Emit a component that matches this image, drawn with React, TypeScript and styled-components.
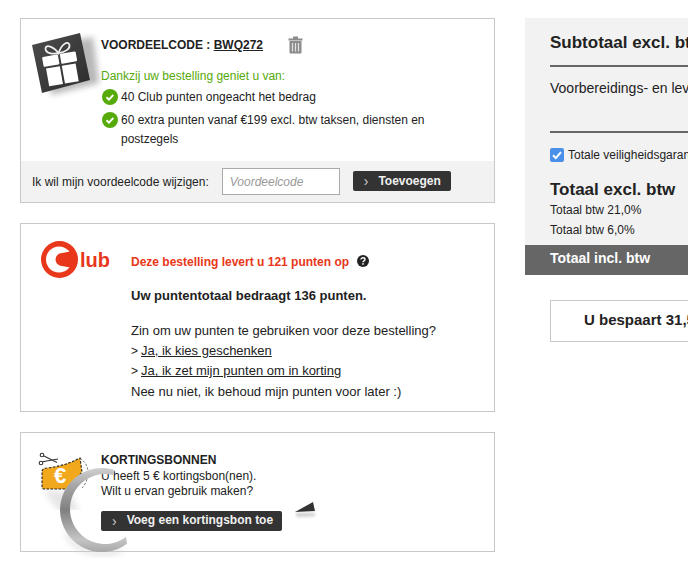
import styled, { createGlobalStyle } from "styled-components";

const GlobalStyle = createGlobalStyle`
  html, body {
    margin: 0;
    padding: 0;
    background: #fff;
    overflow: hidden;
  }
  body {
    font-family: "Liberation Sans", Arial, sans-serif;
    font-size: 12px;
    color: #222;
  }
`;

const GiftIcon = () => (
  <svg width="72" height="68" viewBox="0 0 72 68">
    <defs>
      <linearGradient id="giftBg" x1="0" y1="0" x2="1" y2="1">
        <stop offset="0" stopColor="#4d4d4d" />
        <stop offset="1" stopColor="#2c2c2c" />
      </linearGradient>
      <filter id="giftBlur" x="-30%" y="-30%" width="160%" height="160%">
        <feGaussianBlur stdDeviation="3" />
      </filter>
    </defs>
    <polygon points="14,14 62,4 68,50 20,62" fill="#000" opacity="0.28" filter="url(#giftBlur)" />
    <polygon points="1,12 49,0 59,47 11,60" fill="url(#giftBg)" />
    <g transform="rotate(-10 30 34)">
      <path
        d="M30 20 C26 12 19 9 18 13 C17 18 24 20 30 20 C36 20 43 18 42 13 C41 9 34 12 30 20Z"
        fill="none"
        stroke="#eee"
        strokeWidth="1.8"
      />
      <rect x="13" y="21" width="16" height="10" rx="1" fill="#fff" />
      <rect x="31" y="21" width="16" height="10" rx="1" fill="#fff" />
      <rect x="15" y="33" width="14" height="18" fill="#fff" />
      <rect x="31" y="33" width="14" height="18" fill="#fff" />
    </g>
  </svg>
);

const TrashIcon = () => (
  <svg width="15" height="18" viewBox="0 0 15 18">
    <path d="M5 1.5h5M0.5 3.5h14" stroke="#8c8c8c" strokeWidth="2" fill="none" />
    <path d="M1.5 5h12v11.5a1 1 0 0 1-1 1h-10a1 1 0 0 1-1-1z" fill="#8c8c8c" />
    <path d="M4.5 7v8.5M7.5 7v8.5M10.5 7v8.5" stroke="#e4e4e4" strokeWidth="1.2" />
  </svg>
);

const CheckIcon = () => (
  <svg width="16" height="16" viewBox="0 0 16 16">
    <circle cx="8" cy="8" r="8" fill="#56aa0a" />
    <path d="M4.5 8.3l2.4 2.3 4.4-4.6" fill="none" stroke="#fff" strokeWidth="1.9" />
  </svg>
);

const ClubLogo = () => (
  <svg width="37" height="37" viewBox="0 0 37 37">
    <circle cx="18.5" cy="18.5" r="18.5" fill="#e8371a" />
    <circle cx="18" cy="18.5" r="13" fill="#fff" />
    <circle cx="21" cy="18.5" r="6.5" fill="#e8371a" />
    <path d="M21 12 L32 10 L32 27 L21 25Z" fill="#e8371a" />
  </svg>
);

const QuestionIcon = () => (
  <svg width="12" height="12" viewBox="0 0 12 12">
    <circle cx="6" cy="6" r="6" fill="#222" />
    <path d="M4 4.6C4 3.4 5 2.8 6 2.8s2 .6 2 1.7c0 1.5-2 1.4-2 2.8" fill="none" stroke="#fff" strokeWidth="1.4" />
    <rect x="5.2" y="8.2" width="1.6" height="1.5" fill="#fff" />
  </svg>
);

const VoucherIcon = () => (
  <svg width="60" height="62" viewBox="0 0 60 62">
    <defs>
      <filter id="voucherBlur" x="-40%" y="-40%" width="180%" height="180%">
        <feGaussianBlur stdDeviation="3" />
      </filter>
    </defs>
    <polygon points="8,42 34,44 44,62 26,66" fill="#ccc" opacity="0.5" filter="url(#voucherBlur)" />
    <g stroke="#333" strokeWidth="1.1" fill="none">
      <circle cx="6" cy="15" r="1.8" />
      <circle cx="7" cy="7" r="1.8" />
      <path d="M7.5 13.8L23 11M9 8L22 14.5" />
    </g>
    <path d="M45 10 C50 14 53 18 53 24 C53 30 51 36 47 40" fill="none" stroke="#777" strokeWidth="1" strokeDasharray="2.5 1.5" />
    <path d="M7 23 Q8 20 12 20 Q30 18 45 10 L47 24 L33 41 L9 41 Q7 41 7 38Z" fill="#f1a81c" stroke="#222" strokeWidth="1.1" strokeDasharray="2.5 1.5" />
    <text x="19" y="35" fill="#fff" fontFamily="Liberation Sans" fontWeight="700" fontSize="22">€</text>
  </svg>
);

const SpinnerArc = () => (
  <svg width="90" height="105" viewBox="0 0 90 105">
    <defs>
      <linearGradient id="arcFade" x1="0" y1="0" x2="0" y2="1">
        <stop offset="0" stopColor="#d0d0d0" />
        <stop offset="0.2" stopColor="#a8a8a8" />
        <stop offset="0.5" stopColor="#808080" />
        <stop offset="0.85" stopColor="#c4c4c4" />
        <stop offset="1" stopColor="#a8a8a8" />
      </linearGradient>
      <filter id="arcBlur" x="-20%" y="-20%" width="140%" height="140%">
        <feGaussianBlur stdDeviation="3" />
      </filter>
    </defs>
    <path d="M12 70 C18 88 40 96 66 88" fill="none" stroke="#ccc" strokeWidth="5" opacity="0.55" filter="url(#arcBlur)" />
    <path d="M60 8.06 A42 42 0 1 0 72 81.8 L71 75 A35 35 0 1 1 58 12.93 Z" fill="url(#arcFade)" />
  </svg>
);

const Triangle = () => (
  <svg width="24" height="18" viewBox="0 0 24 18">
    <defs>
      <filter id="triBlur" x="-30%" y="-60%" width="160%" height="220%">
        <feGaussianBlur stdDeviation="1.5" />
      </filter>
    </defs>
    <polygon points="0,11 20,11 20,14 2,15" fill="#999" opacity="0.5" filter="url(#triBlur)" />
    <polygon points="0,10 18,0 20,9" fill="#333" />
  </svg>
);

const App = () => {
  return (
    <>
      <GlobalStyle />
      <Page>
        <LeftColumn>
          <CodePanel>
            <CodeTop>
              <GiftHolder>
                <GiftIcon />
              </GiftHolder>
              <CodeBody>
                <CodeHeading>
                  <CodeTitle>
                    VOORDEELCODE : <u>BWQ272</u>
                  </CodeTitle>
                  <TrashIcon />
                </CodeHeading>
                <GreenLine>Dankzij uw bestelling geniet u van:</GreenLine>
                <BenefitRow>
                  <CheckIcon />
                  <span>40 Club punten ongeacht het bedrag</span>
                </BenefitRow>
                <BenefitRow>
                  <CheckIcon />
                  <span>60 extra punten vanaf €199 excl. btw taksen, diensten en postzegels</span>
                </BenefitRow>
              </CodeBody>
            </CodeTop>
            <CodeForm>
              <span>Ik wil mijn voordeelcode wijzigen:</span>
              <CodeInput placeholder="Voordeelcode" />
              <CodeButton>
                <Chevron>›</Chevron>Toevoegen
              </CodeButton>
            </CodeForm>
          </CodePanel>

          <ClubPanel>
            <ClubHead>
              <ClubBrand>
                <ClubLogo />
                <ClubWord>lub</ClubWord>
              </ClubBrand>
              <RedLine>Deze bestelling levert u 121 punten op</RedLine>
              <QuestionIcon />
            </ClubHead>
            <ClubBody>
              <strong>Uw puntentotaal bedraagt 136 punten.</strong>
              <ClubOptions>
                <div>Zin om uw punten te gebruiken voor deze bestelling?</div>
                <div>
                  <LinkArrow>&gt;</LinkArrow>
                  <u>Ja, ik kies geschenken</u>
                </div>
                <div>
                  <LinkArrow>&gt;</LinkArrow>
                  <u>Ja, ik zet mijn punten om in korting</u>
                </div>
                <div>Nee nu niet, ik behoud mijn punten voor later :)</div>
              </ClubOptions>
            </ClubBody>
          </ClubPanel>

          <VoucherPanel>
            <VoucherHolder>
              <VoucherIcon />
            </VoucherHolder>
            <VoucherBody>
              <VoucherTitle>KORTINGSBONNEN</VoucherTitle>
              <div>U heeft 5 € kortingsbon(nen).</div>
              <div>Wilt u ervan gebruik maken?</div>
              <VoucherButton>
                <Chevron>›</Chevron>Voeg een kortingsbon toe
              </VoucherButton>
            </VoucherBody>
            <ArcOverlay>
              <SpinnerArc />
            </ArcOverlay>
            <TriangleOverlay>
              <Triangle />
            </TriangleOverlay>
          </VoucherPanel>
        </LeftColumn>

        <RightColumn>
          <Summary>
            <SummaryInner>
              <SubTotal>Subtotaal excl. btw</SubTotal>
              <CostsRow>Voorbereidings- en leveringskosten</CostsRow>
              <GuaranteeRow>
                <Tick>
                  <svg width="14" height="14" viewBox="0 0 14 14">
                    <rect width="14" height="14" rx="2" fill="#4a90e8" />
                    <path d="M3 7.3l2.8 2.8L11 4.2" fill="none" stroke="#fff" strokeWidth="2" />
                  </svg>
                </Tick>
                Totale veiligheidsgarantie
              </GuaranteeRow>
              <TotalExcl>Totaal excl. btw</TotalExcl>
              <VatRow>Totaal btw 21,0%</VatRow>
              <VatRow>Totaal btw 6,0%</VatRow>
            </SummaryInner>
            <TotalBar>Totaal incl. btw</TotalBar>
          </Summary>
          <SavingsBox>U bespaart 31,50 €</SavingsBox>
        </RightColumn>
      </Page>
    </>
  );
};

export default App;

const Page = styled.div`
  display: flex;
  width: 900px;
  height: 572px;
  padding: 18px 0 0 20px;
  box-sizing: border-box;
  gap: 30px;
`;

const LeftColumn = styled.div`
  width: 475px;
  display: flex;
  flex-direction: column;
  gap: 20px;
`;

const Panel = styled.section`
  border: 1px solid #c8c8c8;
  box-sizing: border-box;
  position: relative;
`;

const CodePanel = styled(Panel)`
  height: 185px;
  display: flex;
  flex-direction: column;
  justify-content: space-between;
`;

const CodeTop = styled.div`
  display: flex;
  padding: 14px 0 0 10px;
`;

const GiftHolder = styled.div`
  width: 70px;
  flex: none;
`;

const CodeBody = styled.div`
  width: 335px;
`;

const CodeHeading = styled.div`
  display: flex;
  align-items: center;
  gap: 16px;
  height: 24px;
`;

const CodeTitle = styled.div`
  font-weight: 700;
  width: 171px;
`;

const GreenLine = styled.div`
  color: #56aa0a;
  margin: 11px 0 3px;
  line-height: 16px;
`;

const BenefitRow = styled.div`
  display: flex;
  gap: 3px;
  margin: 4px 0 0 1px;
  line-height: 19px;
  svg {
    flex: none;
    margin-top: 1px;
  }
`;

const CodeForm = styled.div`
  display: flex;
  align-items: center;
  height: 41px;
  background: #f2f2f2;
  padding-left: 11px;
`;

const CodeInput = styled.input`
  width: 118px;
  height: 27px;
  box-sizing: border-box;
  margin: 0 13px;
  padding: 0 7px;
  border: 1px solid #aaa;
  background: #fff;
  font: italic 12px "Liberation Sans", Arial, sans-serif;
  &::placeholder {
    color: #999;
  }
`;

const DarkButton = styled.div`
  background: #333;
  color: #f0f0f0;
  height: 20px;
  border-radius: 2px;
  display: flex;
  align-items: center;
  box-sizing: border-box;
  font-weight: 700;
  white-space: nowrap;
  padding-left: 11px;
`;

const CodeButton = styled(DarkButton)`
  width: 98px;
  margin-bottom: 1px;
`;

const Chevron = styled.span`
  font-weight: 400;
  margin-right: 10px;
  color: #ccc;
  font-size: 14px;
  line-height: 14px;
`;

const ClubPanel = styled(Panel)`
  height: 189px;
  padding: 17px 0 0 20px;
`;

const ClubHead = styled.div`
  display: flex;
  align-items: flex-start;
  height: 40px;
  > svg:last-child {
    margin: 14px 0 0 8px;
  }
`;

const ClubBrand = styled.div`
  display: flex;
  width: 90px;
  flex: none;
`;

const ClubWord = styled.span`
  color: #e8371a;
  font-weight: 700;
  font-size: 20px;
  line-height: 20px;
  margin: 9px 0 0 2px;
`;

const RedLine = styled.span`
  color: #e8371a;
  font-weight: 700;
  margin-top: 14px;
`;

const ClubBody = styled.div`
  margin-left: 90px;
  margin-top: 7px;
  font-size: 13px;
  line-height: 16px;
`;

const ClubOptions = styled.div`
  margin-top: 17px;
  line-height: 19.7px;
`;

const LinkArrow = styled.span`
  display: inline-block;
  width: 10px;
  font-size: 12px;
`;

const VoucherPanel = styled(Panel)`
  height: 120px;
  display: flex;
`;

const VoucherHolder = styled.div`
  width: 80px;
  flex: none;
  padding: 15px 0 0 14px;
  box-sizing: border-box;
  line-height: 0;
`;

const VoucherBody = styled.div`
  padding-top: 20px;
  line-height: 15.5px;
`;

const VoucherTitle = styled.div`
  font-weight: 700;
`;

const VoucherButton = styled(DarkButton)`
  width: 181px;
  margin-top: 11px;
`;

const ArcOverlay = styled.div`
  position: absolute;
  left: 34px;
  top: 29px;
  line-height: 0;
`;

const TriangleOverlay = styled.div`
  position: absolute;
  left: 274px;
  top: 69px;
  line-height: 0;
`;

const RightColumn = styled.div`
  width: 300px;
`;

const Summary = styled.div`
  background: #f2f2f2;
  height: 257px;
  display: flex;
  flex-direction: column;
`;

const SummaryInner = styled.div`
  flex: 1;
  padding: 16px 0 0 25px;
`;

const SubTotal = styled.div`
  font-size: 17px;
  font-weight: 700;
  line-height: 18px;
  padding-bottom: 13px;
  border-bottom: 2px solid #666;
`;

const CostsRow = styled.div`
  font-size: 14px;
  line-height: 16px;
  padding: 13px 0 35px;
  border-bottom: 2px solid #666;
`;

const GuaranteeRow = styled.div`
  display: flex;
  align-items: center;
  margin-top: 15px;
  line-height: 14px;
`;

const Tick = styled.span`
  margin-right: 4px;
  line-height: 0;
`;

const TotalExcl = styled.div`
  font-size: 17px;
  font-weight: 700;
  line-height: 18px;
  margin: 19px 0 1px;
`;

const VatRow = styled.div`
  line-height: 20px;
`;

const TotalBar = styled.div`
  height: 30px;
  background: #666;
  color: #fff;
  font-weight: 700;
  font-size: 14px;
  line-height: 27px;
  padding-left: 25px;
`;

const SavingsBox = styled.div`
  margin: 25px 0 0 25px;
  height: 42px;
  border: 1px solid #c8c8c8;
  box-sizing: border-box;
  font-size: 15px;
  font-weight: 700;
  line-height: 38px;
  padding-left: 33px;
`;
